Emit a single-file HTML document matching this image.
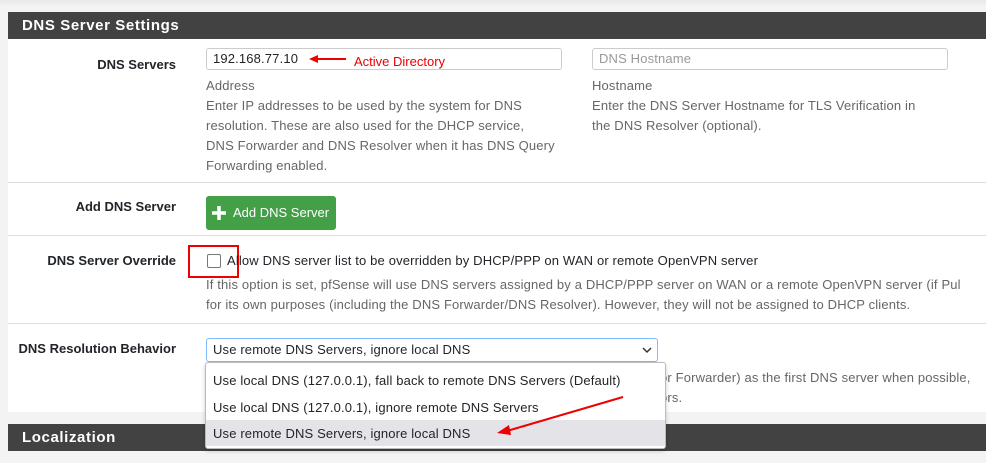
<!DOCTYPE html><html><head><style>
body{margin:0;width:986px;height:463px;background:#f3f3f3;font-family:"Liberation Sans",sans-serif;position:relative;overflow:hidden;color:#212529}
.a{position:absolute}
.hdr{left:8px;width:978px;background:#424242;color:#fff;font-weight:bold;font-size:15px;letter-spacing:0.6px;padding-left:14px;box-sizing:border-box}
.lbl{font-weight:bold;font-size:13px;text-align:right;width:168px;left:8px}
.hlp{font-size:13px;color:#666;line-height:20px;letter-spacing:0.15px;white-space:nowrap}
.inp{border:1px solid #ccc;border-radius:3px;background:#fff;height:22px;box-sizing:border-box;font-size:13px;padding:2px 6px;letter-spacing:0.15px}
.sep{left:8px;width:978px;height:1px;background:#ddd}
</style></head><body>
<div class="a" style="left:0;top:0;width:986px;height:6px;background:linear-gradient(#e8e8e8,#f3f3f3)"></div>
<div class="a" style="left:8px;top:12px;width:978px;height:400px;background:#fff"></div>
<div class="a hdr" style="top:12px;height:27px;line-height:27px">DNS Server Settings</div>
<div class="a lbl" style="top:57px">DNS Servers</div>
<div class="a inp" style="left:206px;top:48px;width:356px">192.168.77.10</div>
<svg class="a" style="left:308px;top:53px" width="40" height="12"><path d="M38 6H8" stroke="#e00" stroke-width="2"/><path d="M1 6L10 2V10Z" fill="#e00"/></svg>
<div class="a" style="left:354px;top:54px;font-size:13px;color:#e00">Active Directory</div>
<div class="a inp" style="left:592px;top:48px;width:356px;color:#999">DNS Hostname</div>
<div class="a hlp" style="left:206px;top:76px">Address<br>Enter IP addresses to be used by the system for DNS<br>resolution. These are also used for the DHCP service,<br>DNS Forwarder and DNS Resolver when it has DNS Query<br>Forwarding enabled.</div>
<div class="a hlp" style="left:592px;top:76px">Hostname<br>Enter the DNS Server Hostname for TLS Verification in<br>the DNS Resolver (optional).</div>
<div class="a sep" style="top:182px"></div>
<div class="a lbl" style="top:199px">Add DNS Server</div>
<div class="a" style="left:206px;top:196px;width:130px;height:34px;background:#43a047;border-radius:3px;color:#fff;font-size:13px;line-height:34px"><svg style="position:absolute;left:5px;top:9px" width="16" height="16"><path d="M8 1V15M1 8H15" stroke="#fff" stroke-width="3.5"/></svg><span style="position:absolute;left:27px">Add DNS Server</span></div>
<div class="a sep" style="top:235px"></div>
<div class="a lbl" style="top:253px">DNS Server Override</div>
<div class="a" style="left:207px;top:254px;width:12px;height:12px;border:1px solid #777;border-radius:2px"></div>
<div class="a" style="left:188px;top:245px;width:51px;height:33px;border:2px solid #e00;box-sizing:border-box"></div>
<div class="a" style="left:227px;top:253px;font-size:13px;letter-spacing:0.15px">Allow DNS server list to be overridden by DHCP/PPP on WAN or remote OpenVPN server</div>
<div class="a hlp" style="left:206px;top:275px">If this option is set, pfSense will use DNS servers assigned by a DHCP/PPP server on WAN or a remote OpenVPN server (if Pul<br>for its own purposes (including the DNS Forwarder/DNS Resolver). However, they will not be assigned to DHCP clients.</div>
<div class="a sep" style="top:323px"></div>
<div class="a lbl" style="top:341px">DNS Resolution Behavior</div>
<div class="a inp" style="left:206px;top:338px;width:452px;border-color:#80bdff;height:24px;padding-top:3px">Use remote DNS Servers, ignore local DNS<svg style="position:absolute;right:5px;top:8px" width="10" height="7"><path d="M1 1L5 5L9 1" stroke="#333" stroke-width="1.5" fill="none"/></svg></div>
<div class="a hlp" style="left:660px;top:368px">or Forwarder) as the first DNS server when possible,<br>ors.</div>
<div class="a" style="left:0;top:412px;width:986px;height:12px;background:#f3f3f3"></div>
<div class="a hdr" style="top:424px;height:27px;line-height:27px">Localization</div>
<div class="a" style="left:205px;top:362px;width:461px;height:87px;background:#fff;border:1px solid #bbb;border-radius:3px;box-sizing:border-box;font-size:13px;letter-spacing:0.15px;box-shadow:0 2px 4px rgba(0,0,0,.2)">
<div style="position:absolute;left:7px;top:10px">Use local DNS (127.0.0.1), fall back to remote DNS Servers (Default)</div>
<div style="position:absolute;left:7px;top:37px">Use local DNS (127.0.0.1), ignore remote DNS Servers</div>
<div style="position:absolute;left:0;top:57px;width:459px;height:26px;background:#e4e4e8"></div>
<div style="position:absolute;left:7px;top:63px">Use remote DNS Servers, ignore local DNS</div>
</div>
<svg class="a" style="left:495px;top:395px" width="135" height="45"><path d="M128 2L12 36" stroke="#e00" stroke-width="2"/><path d="M2 38L14 30L16 40Z" fill="#e00"/></svg>
</body></html>
